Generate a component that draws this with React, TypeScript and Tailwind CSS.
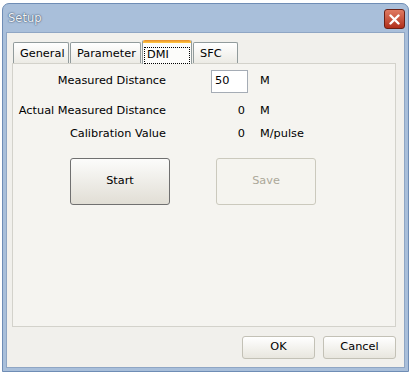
import React from 'react';

const font = "font-['DejaVu_Sans',sans-serif]";

function Tab({ label, width, active }: { label: string; width: string; active?: boolean }) {
  if (active) {
    return (
      <div
        className={`relative z-10 -mb-px ml-[1px] flex h-[24px] ${width} flex-col rounded-t-[2px] border-x border-[#919b9c] bg-[#fcfcfa]`}
      >
        <div className="h-[3px] rounded-t-[2px] bg-linear-to-b from-[#e68b2c] to-[#ffc73c]" />
        <div className="mx-[1px] mt-[4px] flex-1 border border-dotted border-black pl-[2px] leading-[13px]">
          {label}
        </div>
      </div>
    );
  }
  return (
    <div
      className={`ml-[1px] flex h-[21px] ${width} items-center rounded-t-[2px] border-x border-t border-[#919b9c] bg-linear-to-b from-white to-[#ecebe5] pl-[6px] pt-[2px]`}
    >
      {label}
    </div>
  );
}

export default function App() {
  return (
    <div className={`h-[375px] w-[412px] bg-white pl-[2px] pt-[3px] text-[11.3px] text-black ${font}`}>
      <div className="flex h-[369px] w-[407px] flex-col rounded-t-[7px] border border-[#6f8db5] bg-[#a9bfda]">
        {/* title bar */}
        <div className="flex h-[28px] items-center pl-[5px] pr-[3px]">
          <span className="mt-[2px] text-[11.5px] text-[#eef2f7] [text-shadow:0_0_2px_#3f526c,0_0_1px_#3f526c]">
            Setup
          </span>
          <button className="ml-auto mt-[2px] flex h-[20px] w-[21px] items-center justify-center rounded-[3px] border border-[#6b2015] bg-linear-to-b from-[#e07a62] to-[#b02e1a]">
            <svg width="11" height="11" viewBox="0 0 11 11">
              <path d="M1.5 1.5 L9.5 9.5 M9.5 1.5 L1.5 9.5" stroke="white" strokeWidth="2.4" strokeLinecap="round" />
            </svg>
          </button>
        </div>

        {/* client */}
        <div className="mx-[3px] mb-[3px] flex flex-1 flex-col border border-[#8fa6c4] bg-[#f1f0ec] pl-[5px] pr-[8px] pt-[8px]">
          <div className="flex h-[22px] items-end">
            <Tab label="General" width="w-[56px]" />
            <Tab label="Parameter" width="w-[71px]" />
            <Tab label="DMI" width="w-[50px]" active />
            <Tab label="SFC" width="w-[45px]" />
          </div>

          <div className="h-[264px] border border-[#d3d2cb] bg-[#f5f4f0] pt-[6px]">
            <div className="grid grid-cols-[153px_45px_37px_12px_1fr] items-center">
              <div className="text-right">Measured Distance</div>
              <div />
              <div className="flex h-[23px] items-center border border-[#a5acb5] bg-white pl-[3px]">50</div>
              <div />
              <div>M</div>

              <div className="mt-[10px] h-[16px] text-right leading-[16px]">Actual Measured Distance</div>
              <div />
              <div className="mt-[10px] pr-[3px] text-right">0</div>
              <div />
              <div className="mt-[10px]">M</div>

              <div className="mt-[6px] h-[16px] text-right leading-[16px]">Calibration Value</div>
              <div />
              <div className="mt-[6px] pr-[3px] text-right">0</div>
              <div />
              <div className="mt-[6px]">M/pulse</div>
            </div>

            <div className="mt-[15px] flex pl-[57px]">
              <button className="flex h-[47px] w-[100px] items-center justify-center rounded-[3px] border border-[#707070] bg-linear-to-b from-[#fcfcfb] to-[#e1ded5]">
                Start
              </button>
              <button className="ml-[46px] flex h-[47px] w-[100px] items-center justify-center rounded-[3px] border border-[#cbc9bd] bg-[#f5f4ef] text-[#aca899]">
                Save
              </button>
            </div>
          </div>

          <div className="mt-[9px] flex justify-end">
            <button className="flex h-[23px] w-[73px] items-center justify-center rounded-[3px] border border-[#c3c1b6] bg-linear-to-b from-white to-[#e8e6de]">
              OK
            </button>
            <button className="ml-[8px] flex h-[23px] w-[73px] items-center justify-center rounded-[3px] border border-[#c3c1b6] bg-linear-to-b from-white to-[#e8e6de]">
              Cancel
            </button>
          </div>
        </div>
      </div>
    </div>
  );
}
